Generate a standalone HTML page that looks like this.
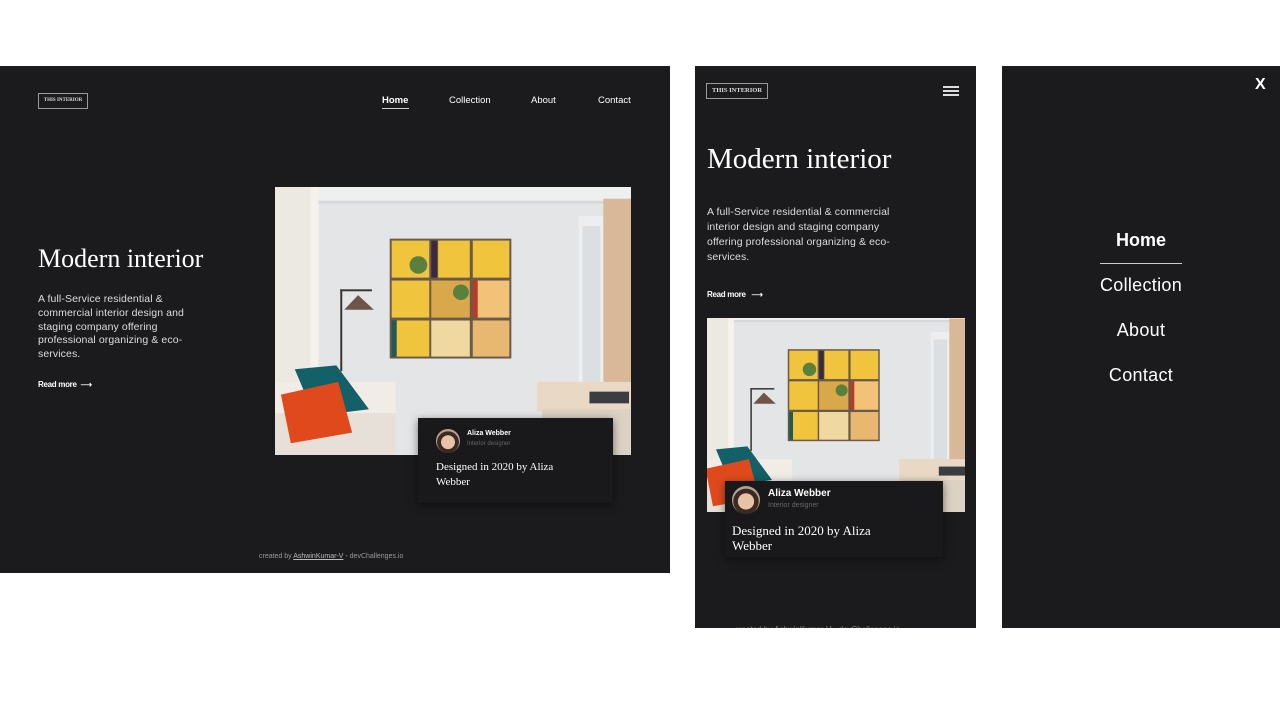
<!DOCTYPE html>
<html><head><meta charset="utf-8"><style>
*{margin:0;padding:0;box-sizing:border-box}
body{width:1280px;height:720px;background:#fff;position:relative;overflow:hidden;font-family:"Liberation Sans",sans-serif;color:#fff}
.p{position:absolute;background:#1b1b1d}
.a{position:absolute;white-space:nowrap}
.serif{font-family:"Liberation Serif",serif}
.logo{position:absolute;border:1px solid #9a9a9a;font-family:"Liberation Serif",serif;font-weight:bold;color:#ddd;text-align:center}
.card{position:absolute;background:#19191b;box-shadow:0 2px 8px rgba(0,0,0,.5)}
.av{position:absolute;border-radius:50%;background:radial-gradient(circle at 50% 55%,#e8c2a4 0 38%,#3a2a22 40% 60%,#b8a090 62%)}
</style></head><body>
<svg width="0" height="0" style="position:absolute"><defs>
<g id="room">
<rect width="360" height="275" fill="#e3e5e7"/>
<rect width="360" height="16" fill="#eef0f0"/>
<rect y="14" width="360" height="3" fill="#d6d8da"/>
<rect x="0" y="0" width="42" height="275" fill="#ece8e2"/>
<rect x="36" y="0" width="8" height="275" fill="#f6f1ea"/>
<rect x="307" y="30" width="26" height="210" fill="#eceeef"/>
<rect x="311" y="40" width="18" height="200" fill="#dcdfe1"/>
<rect x="332" y="12" width="28" height="200" fill="#d8b898"/>
<rect x="116" y="53" width="123" height="123" fill="#6b5a48"/>
<g fill="#f0c43c">
<rect x="118" y="55" width="38" height="38"/><rect x="165" y="55" width="32" height="38"/><rect x="200" y="55" width="37" height="38"/>
<rect x="118" y="96" width="38" height="38"/><rect x="158" y="96" width="39" height="38" fill="#d9a84a"/><rect x="204" y="96" width="33" height="38" fill="#f2c278"/>
<rect x="123" y="137" width="33" height="37"/><rect x="158" y="137" width="39" height="37" fill="#f0d9a0"/><rect x="200" y="137" width="37" height="37" fill="#e8b870"/>
</g>
<rect x="158" y="55" width="6" height="38" fill="#3a2a40"/><rect x="200" y="96" width="5" height="38" fill="#b83a2a"/><rect x="118" y="137" width="5" height="37" fill="#1e5a58"/>
<circle cx="145" cy="80" r="9" fill="#5a8040"/><circle cx="188" cy="108" r="8" fill="#5a8040"/>
<rect x="66" y="105" width="2" height="84" fill="#3a3430"/><rect x="66" y="105" width="32" height="2" fill="#3a3430"/>
<polygon points="84,111 70,126 100,126" fill="#6e5548"/>
<rect x="0" y="200" width="122" height="75" fill="#f1ece6"/>
<rect x="0" y="232" width="122" height="43" fill="#e6e0d8"/>
<polygon points="20,187 62,183 95,228 40,235" fill="#136068"/>
<polygon points="6,213 64,200 78,252 16,263" fill="#e0491c"/>
<rect x="265" y="200" width="95" height="30" fill="#e8d8c4"/>
<rect x="270" y="228" width="90" height="47" fill="#dcd2c4"/>
<rect x="318" y="210" width="40" height="12" fill="#3a3d42"/>
</g></defs></svg>

<!-- Desktop -->
<div class="p" style="left:0;top:66px;width:670px;height:507px"></div>
<div class="logo" style="left:38px;top:93px;width:50px;height:16px;font-size:5px;line-height:14px">THIS INTERIOR</div>
<div class="a" style="left:382px;top:95px;font-size:9.5px;font-weight:bold">Home</div>
<div class="a" style="left:382px;top:108px;width:27px;height:1px;background:#ccc"></div>
<div class="a" style="left:449px;top:95px;font-size:9.5px">Collection</div>
<div class="a" style="left:531px;top:95px;font-size:9.5px">About</div>
<div class="a" style="left:598px;top:95px;font-size:9.5px">Contact</div>
<div class="a serif" style="left:38px;top:244px;font-size:26px">Modern interior</div>
<div class="a" style="left:38px;top:293px;font-size:10.5px;line-height:13.8px;color:#ddd;white-space:normal;width:168px;letter-spacing:.1px">A full-Service residential &amp; commercial interior design and staging company offering professional organizing &amp; eco-services.</div>
<div class="a" style="left:38px;top:380px;font-size:8px;font-weight:bold;letter-spacing:-.3px">Read more &nbsp;⟶</div>
<svg class="a" style="left:275px;top:187px" width="356" height="268" viewBox="0 0 360 275" preserveAspectRatio="none"><use href="#room"/></svg>
<div class="card" style="left:418px;top:418px;width:195px;height:85px"></div>
<div class="av" style="left:436px;top:429px;width:24px;height:24px"></div>
<div class="a" style="left:467px;top:430px;font-size:7px;font-weight:bold">Aliza Webber</div>
<div class="a" style="left:467px;top:441px;font-size:6px;color:#666">Interior designer</div>
<div class="a serif" style="left:436px;top:460px;font-size:11px;line-height:15px;white-space:normal;width:150px">Designed in 2020 by Aliza Webber</div>
<div class="a" style="left:259px;top:553px;font-size:7px;color:#999">created by <u style="color:#bbb">AshwinKumar-V</u> - devChallenges.io</div>

<!-- Mobile -->
<div class="p" style="left:695px;top:66px;width:281px;height:562px"></div>
<div class="logo" style="left:706px;top:83px;width:62px;height:16px;font-size:6.5px;line-height:14px">THIS INTERIOR</div>
<div class="a" style="left:943px;top:86px;width:16px;height:2px;background:#ddd;box-shadow:0 4px 0 #ddd,0 8px 0 #ddd"></div>
<div class="a serif" style="left:707px;top:143px;font-size:29px">Modern interior</div>
<div class="a" style="left:707px;top:205px;font-size:10.5px;line-height:15px;color:#ddd;white-space:normal;width:205px;letter-spacing:.1px">A full-Service residential &amp; commercial interior design and staging company offering professional organizing &amp; eco-services.</div>
<div class="a" style="left:707px;top:290px;font-size:8px;font-weight:bold;letter-spacing:-.3px">Read more &nbsp;&nbsp;⟶</div>
<svg class="a" style="left:707px;top:318px" width="258" height="194" viewBox="8 10 345 262" preserveAspectRatio="xMidYMid slice"><use href="#room"/></svg>
<div class="card" style="left:725px;top:481px;width:218px;height:76px"></div>
<div class="av" style="left:732px;top:486px;width:28px;height:28px"></div>
<div class="a" style="left:768px;top:488px;font-size:10px;font-weight:bold">Aliza Webber</div>
<div class="a" style="left:768px;top:502px;font-size:7px;color:#666">Interior designer</div>
<div class="a serif" style="left:732px;top:523px;font-size:13px;line-height:15px;white-space:normal;width:170px">Designed in 2020 by Aliza Webber</div>
<div class="a" style="left:735px;top:622px;font-size:8px;color:#888;height:6px;overflow:hidden;line-height:16px">created by AshwinKumar-V - devChallenges.io</div>

<!-- Menu -->
<div class="p" style="left:1002px;top:66px;width:278px;height:562px"></div>
<div class="a" style="left:1255px;top:76px;font-size:16px;font-weight:bold">X</div>
<div class="a" style="left:1090px;top:230px;width:102px;text-align:center;font-size:18px;font-weight:bold">Home</div>
<div class="a" style="left:1100px;top:263px;width:82px;height:1px;background:#ccc"></div>
<div class="a" style="left:1090px;top:275px;width:102px;text-align:center;font-size:18px;letter-spacing:.3px">Collection</div>
<div class="a" style="left:1090px;top:320px;width:102px;text-align:center;font-size:18px;letter-spacing:.3px">About</div>
<div class="a" style="left:1090px;top:365px;width:102px;text-align:center;font-size:18px;letter-spacing:.3px">Contact</div>
</body></html>
